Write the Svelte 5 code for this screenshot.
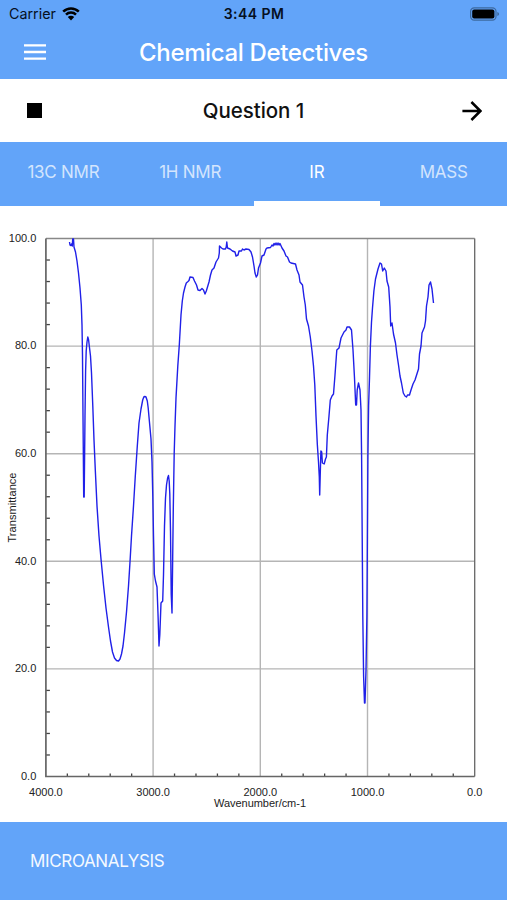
<script>
  const tabs = ['13C NMR', '1H NMR', 'IR', 'MASS'];
  let active = $state('IR');

  // Plot frame in chart units
  const frame = { left: 45.9, right: 474.7, top: 32.5, bottom: 570.5 };
  const xAt = (v) => frame.left + ((4000 - v) / 4000) * (frame.right - frame.left);
  const yAt = (v) => frame.bottom - (v / 100) * (frame.bottom - frame.top);

  const xMajor = [4000, 3000, 2000, 1000, 0];
  const yMajor = [0, 20, 40, 60, 80, 100];
  const xMinor = Array.from({ length: 19 }, (_, i) => (i + 1) * 200).filter((v) => v % 1000);
  const yMinor = Array.from({ length: 24 }, (_, i) => (i + 1) * 4).filter((v) => v % 20);

  // IR trace
  const trace = `69.5,36 70,39 71,39.5 71.5,38 72.3,40 72.7,33 73.5,33 74,41 75.5,46 77,55 78.5,67 80,82 81.3,99
    82,119 82.5,150 83,210 83.7,291 84.2,291 85,210 85.6,165 86.2,145 87,136 87.8,131 88.6,134 89.3,140
    90.5,150 91.5,167 92.8,200 94,234 95.3,264 97,300 99,330 101,353 103.5,379 106,402 108.5,421
    110.5,435 112.5,446 114.5,452 116.5,454.5 118.5,455 120,453 121.5,448 123,440 124.5,427 126.5,406
    128.5,380 130,356 131.5,330 133.5,300 135.3,270 137.3,240 139,217 141,203 142.7,194 143.8,191
    144.8,190.5 146,191 147.3,195 148.2,202 149,211 151,233 152,256 152.8,290 153.5,330 154.3,368
    155.5,375 157,381 158,408 159,440 159.8,429 161,397 162.7,395 163.5,369 164.5,320 165.5,292
    166.5,279 167.6,272 168.5,269.5 169.2,275 169.8,288 170.5,325 171.2,388 172,407 172.7,351 173.3,302
    174.2,247 175,220 176,192 177.8,160 179.3,139 181,109 182.3,95 183.5,87
    185,81 186.3,77 188,75.5 189,74.5 190,71 193,71.5 194.5,75 196.5,79 198,84 200,84.5 202,82.5 203.5,84
    205,88 206.3,85 207.5,81 209,76 210.5,69 212,64 214,62 216,56 218.5,52 219.3,47 219.5,40 221.5,42
    223,43 225.5,43 226.2,41 226.8,36 227.5,42 230,43 232.5,45 235,46 236,50 238,49 239,45 241.5,45
    242.5,43 244,44 246,43 249,43.5 251,46 252.5,51 254,60 255,67 256.3,71 257.5,69 258.5,62 260.5,57
    262,50 264,49 266,43 267,42 270.5,41.5 272,39 273,40 274,37.5 275,39 276,37 277,39 278,37 279,39
    280,37.5 282,42 284,45 286,50 287.5,51 289.5,56 291,57 295.5,58 297,64 299,69 300,76 302.5,79
    304,91 305.3,99 306.5,113 308.5,120 310.3,131 312,145 313.5,160 314.8,179 316,210 317.3,238
    318.5,256 319.3,271 319.7,289 320.2,270 320.9,245 321.7,246 322.4,257 324.2,258 325.5,253 326.4,251
    327.3,229 329,210 330.3,194 332,190 333.5,188 335,169 336.8,144 339,142 341,132 343,128 344,126
    346,124 347,121 349.5,121 351.5,124 353,144 354.5,172 355.7,199 356.5,199 357.2,184 358.5,177
    360,184 361,204 361.6,250 362.2,330 362.8,410 363.6,470 364.5,497 365,497 366,464 366.9,410
    367.4,330 367.9,250 368.6,200 369.5,172 370.4,140 371.5,116 372.5,102 373.9,85 375.5,73 378,63
    380,57 381.5,58 382.7,65 384.3,62 386,65 387,75 388.7,81 390,101 390.7,120 392,117 393.5,128
    395.5,137 397,149 398.5,159 400,170 401.5,177 403.3,187 405,190 406.5,191 407.5,189 409.5,189
    411,184 413,178 415,174 418.5,163 419.5,148 421,140 422,127 424.5,121 425.5,115 426.5,100 428,91
    429,79 430.5,76 432,83 433.5,97`;
</script>

<div class="screen">
  <header class="top">
    <div class="status">
      <div class="carrier">
        <span>Carrier</span>
        <svg class="wifi" viewBox="0 0 18 14" width="18" height="14">
          <path d="M1.2 4.7a11 11 0 0 1 15.6 0M4 7.7a7 7 0 0 1 10 0" />
          <path class="dot" d="M5.8 10a4.5 4.5 0 0 1 6.4 0L9 13.4z" />
        </svg>
      </div>
      <span class="clock">3:44 PM</span>
      <svg class="battery" viewBox="0 0 31 14" width="31" height="14">
        <rect class="shell" x="1.6" y=".8" width="25.4" height="12.4" rx="3.6" />
        <rect x="3.2" y="2.6" width="22.2" height="8.8" rx="2" />
        <path class="cap" d="M28.3 5v4q1.8-.4 1.8-2t-1.8-2z" />
      </svg>
    </div>
    <div class="title-bar">
      <button class="icon-btn" aria-label="Menu">
        <svg viewBox="0 0 22 16" width="22" height="16">
          <path d="M0 1.4h22M0 8h22M0 14.6h22" stroke="#fff" stroke-width="2.4" />
        </svg>
      </button>
      <h1>Chemical Detectives</h1>
    </div>
  </header>

  <div class="question">
    <button class="icon-btn" aria-label="Stop"><span class="stop"></span></button>
    <h2>Question 1</h2>
    <button class="icon-btn next" aria-label="Next">
      <svg viewBox="0 0 20 20" width="20" height="20">
        <path d="M.4 10h18M9.4 1l9 9-9 9" fill="none" stroke="#000" stroke-width="2.5" />
      </svg>
    </button>
  </div>

  <nav class="tabs">
    {#each tabs as tab}
      <button class="tab" class:active={active === tab} onclick={() => (active = tab)}>{tab}</button>
    {/each}
  </nav>

  <main class="chart">
    <svg viewBox="0 0 507 616" width="507" height="616">
      <g class="grid">
        {#each xMajor.slice(1, -1) as v}
          <line x1={xAt(v)} x2={xAt(v)} y1={frame.top} y2={frame.bottom} />
        {/each}
        {#each yMajor.slice(1, -1) as v}
          <line x1={frame.left} x2={frame.right} y1={yAt(v)} y2={yAt(v)} />
        {/each}
      </g>
      <g class="ticks">
        {#each xMinor as v}
          <line x1={xAt(v)} x2={xAt(v)} y1={frame.bottom - 3} y2={frame.bottom} />
        {/each}
        {#each yMinor as v}
          <line x1={frame.left} x2={frame.left + 4} y1={yAt(v)} y2={yAt(v)} />
        {/each}
      </g>
      <path class="edge-top" d="M{frame.left} {frame.top}H{frame.right}" />
      <path class="edge-right" d="M{frame.right} {frame.top}V{frame.bottom}" />
      <path class="axis" d="M{frame.left} {frame.top}V{frame.bottom}H{frame.right}" />
      <polyline class="trace" points={trace} />
      {#each yMajor as v}
        <text x="36.3" y={yAt(v) + 3.3} text-anchor="end">{v.toFixed(1)}</text>
      {/each}
      {#each xMajor as v}
        <text x={xAt(v)} y="590" text-anchor="middle">{v.toFixed(1)}</text>
      {/each}
      <text x="260" y="601.3" text-anchor="middle" textLength="92">Wavenumber/cm-1</text>
      <text transform="translate(15.5 301.5) rotate(-90)" text-anchor="middle" textLength="70">Transmittance</text>
    </svg>
  </main>

  <footer class="bottom">
    <button class="micro">MICROANALYSIS</button>
  </footer>
</div>

<style>
  :global(body) { margin: 0; background: #fff; }

  .screen {
    display: flex; flex-direction: column;
    width: 507px; height: 900px; overflow: hidden;
    background: #fff; font-family: Inter, "Liberation Sans", sans-serif;
  }
  button { padding: 0; border: none; background: none; font-family: inherit; cursor: pointer; }
  h1, h2 { margin: 0; }

  .top { height: 79px; background: #62a4f9; }
  .status {
    display: grid; grid-template-columns: 1fr auto 1fr; align-items: center;
    height: 27px; padding: 0 7px 0 9px; color: #06101f; font-size: 14.3px;
  }
  .carrier { display: flex; align-items: center; gap: 6px; }
  .wifi { fill: none; stroke: #000; stroke-width: 2.5; }
  .wifi .dot { fill: #000; stroke: none; }
  .clock { font-weight: 600; font-size: 14px; letter-spacing: 0.45px; margin-left: -1px; }
  .battery { justify-self: end; }
  .battery .shell { fill: none; stroke: #3d699f; stroke-width: 1.2; }
  .battery .cap { fill: #3d699f; }

  .title-bar {
    display: grid; grid-template-columns: 69px 1fr 69px; align-items: center;
    height: 50px;
  }
  .icon-btn { display: flex; align-items: center; justify-content: center; }
  h1 { color: #fff; font-size: 24px; font-weight: 550; text-align: center; letter-spacing: -0.35px; white-space: nowrap; }

  .question {
    display: grid; grid-template-columns: 69px 1fr 69px; align-items: center;
    height: 63px;
  }
  .stop { width: 15px; height: 15px; background: #000; }
  .next { padding-right: 2px; }
  h2 { color: #111; font-size: 20.5px; font-weight: 550; text-align: center; letter-spacing: -0.05px; }

  .tabs { display: grid; grid-template-columns: repeat(4, 1fr); height: 64px; background: #62a4f9; }
  .tab {
    padding-top: 0; color: #d3e5fd; font-size: 17px; letter-spacing: -0.25px;
    border-bottom: 5px solid transparent; border-top: 1px solid transparent;
  }
  .tab.active { color: #fff; border-bottom-color: #fff; }

  .chart { height: 616px; }
  .chart svg { display: block; }
  .chart text { font-family: "Liberation Sans", Arial, sans-serif; font-size: 11px; fill: #222; }
  .grid line { stroke: #b5b5b5; stroke-width: 1.4; }
  .ticks line { stroke: #444; stroke-width: 1.3; }
  .edge-top { stroke: #888; stroke-width: 1.4; }
  .edge-right { stroke: #666; stroke-width: 1.3; }
  .axis { fill: none; stroke: #666; stroke-width: 1.7; }
  .trace { fill: none; stroke: #2020e8; stroke-width: 1.4; stroke-linejoin: round; }

  .bottom { display: flex; align-items: center; height: 78px; padding-left: 30px; background: #62a4f9; }
  .micro { color: #f4f9ff; font-size: 17px; letter-spacing: -0.35px; }
</style>
